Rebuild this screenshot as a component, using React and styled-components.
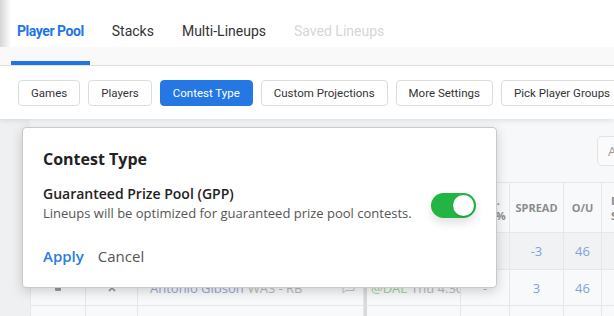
import React from "react";
import styled, { createGlobalStyle } from "styled-components";

const Global = createGlobalStyle`
  html, body { margin: 0; padding: 0; }
  body {
    width: 614px; height: 316px; overflow: hidden;
    background: #eff0f2;
    font-family: "Open Sans", "Liberation Sans", sans-serif;
  }
  * { box-sizing: border-box; }
`;

const Page = styled.div`
  position: relative;
  width: 614px;
  height: 316px;
  overflow: hidden;
  display: flex;
  flex-direction: column;
`;

const TabsBar = styled.nav`
  flex-shrink: 0;
  height: 66px;
  display: flex;
  align-items: stretch;
  gap: 16px;
  padding-left: 11px;
  background:
    linear-gradient(to right, #d6d6d6 0, rgba(255,255,255,0) 11px) 0 0 / 100% 47px no-repeat,
    linear-gradient(#fff 0 47px, #f9f9f9 47px);
  border-bottom: 1px solid #e3e3e3;
`;

const Tab = styled.div`
  display: flex;
  align-items: center;
  padding: 0 6px;
  font-family: Roboto, "Noto Sans", sans-serif;
  font-size: 14px;
  letter-spacing: ${(p) => (p.$active ? "-0.45px" : "0px")};
  font-weight: ${(p) => (p.$active ? 700 : 400)};
  color: ${(p) => (p.$active ? "#1f74e8" : p.$disabled ? "#d6d6d6" : "#333")};
  border-bottom: 4px solid ${(p) => (p.$active ? "#1f74e8" : "transparent")};
  white-space: nowrap;
`;

const Toolbar = styled.div`
  flex-shrink: 0;
  position: relative;
  z-index: 1;
  height: 53px;
  display: flex;
  gap: 8px;
  padding: 14px 18px 0;
  background: #fff;
  box-shadow: 0 2px 5px rgba(0, 0, 0, 0.09);
  overflow: hidden;
`;

const ToolButton = styled.button`
  flex-shrink: 0;
  margin: 0;
  height: 26px;
  padding: 0 12px;
  border: 1px solid ${(p) => (p.$active ? "#2577e3" : "#dcdcdc")};
  border-radius: 4px;
  background: ${(p) => (p.$active ? "#2577e3" : "#fff")};
  color: ${(p) => (p.$active ? "#fff" : "#333")};
  font-family: Roboto, "Noto Sans", sans-serif;
  font-size: 11.5px;
  white-space: nowrap;
`;

const Content = styled.main`
  flex: 1;
  padding-left: 30px;
  background: #eff0f2;
`;

const Panel = styled.section`
  height: 100%;
  background: #f7f8fa;
`;

const FilterRow = styled.div`
  height: 63px;
  display: flex;
  justify-content: flex-end;
  padding-top: 17px;
  margin-right: -60px;
`;

const GhostButton = styled.button`
  height: 30px;
  width: 77px;
  padding: 0 10px;
  border: 1px solid #e2e3e5;
  border-radius: 5px;
  background: #fbfbfc;
  color: #999;
  font-family: "Open Sans", sans-serif;
  font-size: 13px;
  text-align: left;
`;

const Table = styled.div`
  display: grid;
  grid-template-columns: 55px 52px 226px 97px 49px 54px 38px 80px;
  grid-template-rows: 50px 37px 36px 37px;
  border-left: 1px solid #e6e7e9;
  border-top: 1px solid #e6e7e9;
`;

const Cell = styled.div`
  display: flex;
  align-items: center;
  justify-content: ${(p) => (p.$left ? "flex-start" : "center")};
  padding: ${(p) => (p.$left ? "0 8px 0 12px" : "0")};
  gap: 4px;
  border-right: 1px solid #e6e7e9;
  border-bottom: 1px solid #e6e7e9;
  border-left: ${(p) => (p.$thick ? "3px solid #d9d9d9" : "none")};
  background: ${(p) => (p.$shade ? "#f1f2f4" : "#f8f9fb")};
  font-size: 13px;
  white-space: nowrap;
  overflow: hidden;
`;

const HeadCell = styled(Cell)`
  font-size: 11px;
  font-weight: 700;
  line-height: 15px;
  color: #8c8c8c;
  text-align: ${(p) => (p.$left ? "left" : "center")};
  padding: ${(p) => (p.$left ? "0 0 0 9px" : "0")};
`;

const Num = styled.span`
  color: #7fa2da;
`;

const Name = styled.span`
  color: #95a9d2;
`;

const Meta = styled.span`
  color: #b9b9b9;
`;

const Opp = styled.span`
  color: #9fd19f;
`;

const Grow = styled.span`
  flex: 1;
`;

const Popover = styled.div`
  position: absolute;
  left: 22px;
  top: 127px;
  width: 475px;
  padding: 20px;
  background: #fff;
  border: 1px solid #c9c9c9;
  border-radius: 4px;
  box-shadow: 0 3px 12px rgba(0, 0, 0, 0.18);
  font-family: "Open Sans", sans-serif;
  z-index: 5;
`;

const PopTitle = styled.h3`
  margin: 0;
  font-size: 16px;
  line-height: 22px;
  font-weight: 700;
  color: #222;
`;

const OptionRow = styled.div`
  margin-top: 14px;
  display: flex;
  align-items: center;
  justify-content: space-between;
`;

const OptionText = styled.div`
  display: flex;
  flex-direction: column;
`;

const OptionTitle = styled.div`
  font-size: 14px;
  line-height: 20px;
  font-weight: 600;
  color: #222;
`;

const OptionDesc = styled.div`
  font-size: 13px;
  line-height: 18px;
  color: #555;
`;

const Toggle = styled.div`
  position: relative;
  width: 45px;
  height: 25px;
  margin-top: 5px;
  border-radius: 13px;
  background: ${(p) => (p.$on ? "#22b544" : "#ccc")};
  box-shadow: 0 5px 10px rgba(0, 0, 0, 0.12);
  flex-shrink: 0;

  &::after {
    content: "";
    position: absolute;
    top: 2px;
    left: ${(p) => (p.$on ? "22px" : "2px")};
    width: 21px;
    height: 21px;
    border-radius: 50%;
    background: #fff;
    box-shadow: 0 1px 2px rgba(0, 0, 0, 0.2);
  }
`;

const Actions = styled.div`
  margin-top: 23px;
  display: flex;
  gap: 14px;
`;

const LinkButton = styled.button`
  padding: 0;
  border: none;
  background: none;
  font-family: "Open Sans", sans-serif;
  font-size: 15px;
  line-height: 22px;
  font-weight: ${(p) => (p.$primary ? 600 : 400)};
  color: ${(p) => (p.$primary ? "#2a7de1" : "#555")};
`;

const LockIcon = styled.span`
  width: 6px;
  height: 6px;
  background: #9a9a9a;
  border-radius: 1px;
`;

function CommentIcon() {
  return (
    <svg width="13" height="12" viewBox="0 0 13 12" fill="none" stroke="#c4c4c4" strokeWidth="1">
      <path d="M1 1.5h11v7H4l-3 2.5z" />
    </svg>
  );
}

function XIcon() {
  return (
    <svg width="8" height="8" viewBox="0 0 8 8" stroke="#8f8f8f" strokeWidth="1.6">
      <path d="M1 1l6 6M7 1L1 7" />
    </svg>
  );
}

const tabs = [
  { label: "Player Pool", active: true },
  { label: "Stacks" },
  { label: "Multi-Lineups" },
  { label: "Saved Lineups", disabled: true },
];

const tools = ["Games", "Players", "Contest Type", "Custom Projections", "More Settings", "Pick Player Groups"];

const rows = [
  { name: "Terry McLaurin", pos: "WAS - WR", opp: "@DAL", time: "Thu 4:30PM", spread: "-3", ou: "46", shade: true },
  { name: "Antonio Gibson", pos: "WAS - RB", opp: "@DAL", time: "Thu 4:30PM", spread: "3", ou: "46" },
  { name: "", pos: "", opp: "", time: "", spread: "", ou: "", empty: true },
];

export default function App() {
  return (
    <Page>
      <Global />
      <TabsBar>
        {tabs.map((t) => (
          <Tab key={t.label} $active={t.active} $disabled={t.disabled}>
            {t.label}
          </Tab>
        ))}
      </TabsBar>
      <Toolbar>
        {tools.map((t) => (
          <ToolButton key={t} $active={t === "Contest Type"}>
            {t}
          </ToolButton>
        ))}
      </Toolbar>
      <Content>
        <Panel>
          <FilterRow>
            <GhostButton>Actions</GhostButton>
          </FilterRow>
          <Table>
            <HeadCell />
            <HeadCell />
            <HeadCell $left>PLAYER</HeadCell>
            <HeadCell $thick>GAME</HeadCell>
            <HeadCell>
              PROJ.
              <br />
              OWN %
            </HeadCell>
            <HeadCell>SPREAD</HeadCell>
            <HeadCell>O/U</HeadCell>
            <HeadCell $left>
              IMP.
              <br />
              SCORE
            </HeadCell>
            {rows.map((r, i) => (
              <React.Fragment key={i}>
                <Cell $shade={r.shade}>{!r.empty && <LockIcon />}</Cell>
                <Cell $shade={r.shade}>{!r.empty && <XIcon />}</Cell>
                <Cell $shade={r.shade} $left>
                  {!r.empty && (
                    <>
                      <Name>{r.name}</Name>
                      <Meta>{r.pos}</Meta>
                      <Grow />
                      <CommentIcon />
                    </>
                  )}
                </Cell>
                <Cell $shade={r.shade} $thick $left style={{ paddingLeft: 4 }}>
                  <Opp>{r.opp}</Opp>
                  <Meta>{r.time}</Meta>
                </Cell>
                <Cell $shade={r.shade}>
                  <Meta>{r.empty ? "" : "-"}</Meta>
                </Cell>
                <Cell $shade={r.shade}>
                  <Num>{r.spread}</Num>
                </Cell>
                <Cell $shade={r.shade}>
                  <Num>{r.ou}</Num>
                </Cell>
                <Cell $shade={r.shade} />
              </React.Fragment>
            ))}
          </Table>
        </Panel>
      </Content>
      <Popover>
        <PopTitle>Contest Type</PopTitle>
        <OptionRow>
          <OptionText>
            <OptionTitle>Guaranteed Prize Pool (GPP)</OptionTitle>
            <OptionDesc>Lineups will be optimized for guaranteed prize pool contests.</OptionDesc>
          </OptionText>
          <Toggle $on />
        </OptionRow>
        <Actions>
          <LinkButton $primary>Apply</LinkButton>
          <LinkButton>Cancel</LinkButton>
        </Actions>
      </Popover>
    </Page>
  );
}
